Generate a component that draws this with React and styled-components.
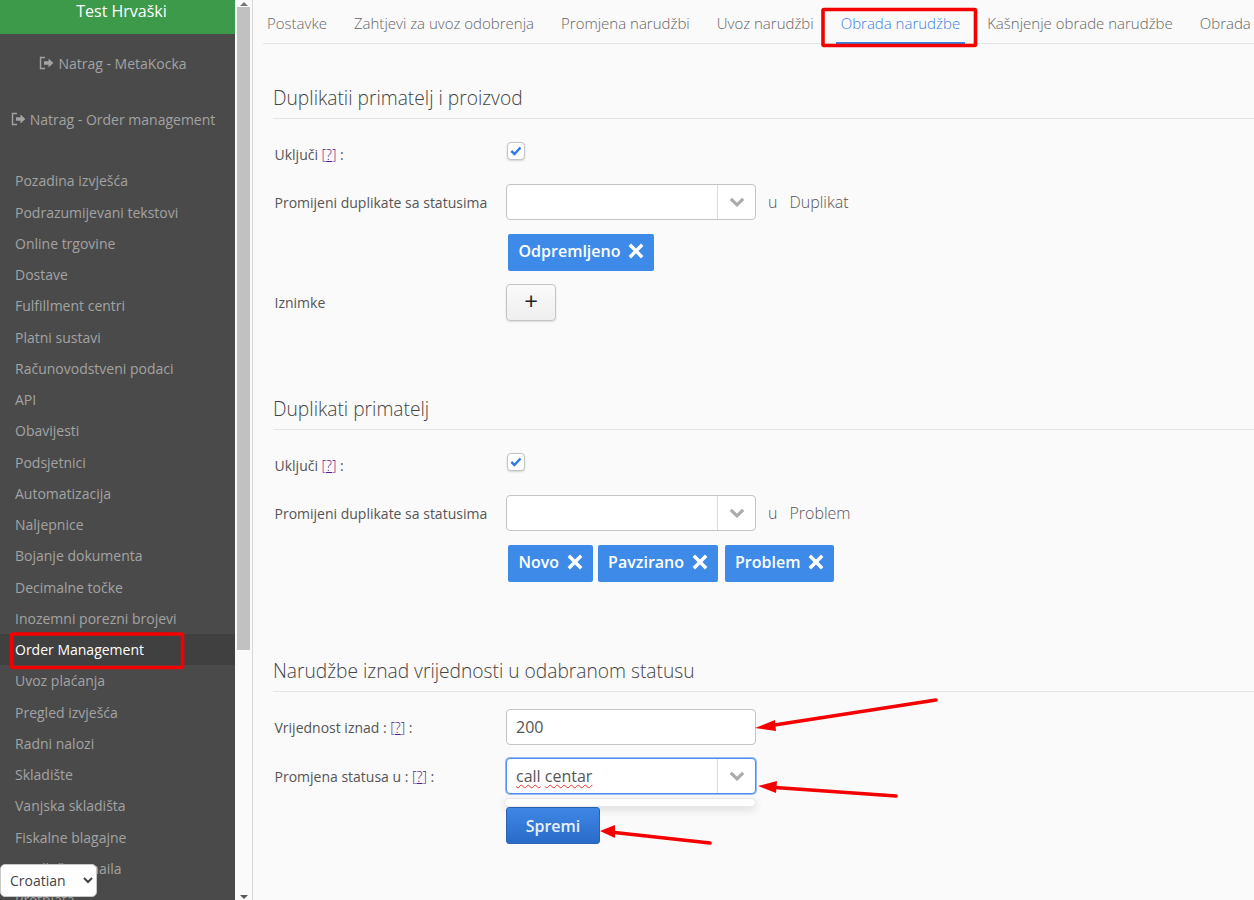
import React from "react";
import styled, { createGlobalStyle } from "styled-components";

const Global = createGlobalStyle`
  html, body { margin: 0; padding: 0; height: 900px; overflow: hidden; background: #fafafa; }
  * { box-sizing: border-box; }
  body { font-family: "Open Sans", "Noto Sans", sans-serif; font-size: 14px; color: #555; }
`;

const Page = styled.div`
  position: relative;
  display: flex;
  width: 1254px;
  height: 900px;
  overflow: hidden;
  background: #fafafa;
`;

const Sidebar = styled.aside`
  width: 235px;
  flex: none;
  height: 900px;
  background: #4a4a4a;
  overflow: hidden;
`;

const Brand = styled.div`
  height: 34px;
  padding-left: 8px;
  background: #3c9a4a;
  color: #fff;
  font-size: 16px;
  line-height: 22px;
  text-align: center;
`;

const BackLink = styled.div`
  display: flex;
  align-items: center;
  justify-content: center;
  gap: 4px;
  height: 56px;
  color: #a3a3a3;
  font-size: 14px;
  padding-right: 9px;
`;

const BackList = styled.div`
  display: flex;
  flex-direction: column;
  padding-top: 1px;
`;

const Menu = styled.ul`
  list-style: none;
  margin: 18.3px 0 0;
  padding: 0;
`;

const MenuItem = styled.li`
  height: 31.25px;
  line-height: 31.25px;
  padding-left: 15px;
  font-size: 14px;
  white-space: nowrap;
  color: ${(p) => (p.$active ? "#fff" : "#a3a3a3")};
  background: ${(p) => (p.$active ? "#404040" : "transparent")};
`;

const Scrollbar = styled.div`
  width: 18px;
  flex: none;
  height: 900px;
  display: flex;
  flex-direction: column;
  background: #fafafa;
  border-right: 1px solid #d8d8d8;
  padding: 0 2px 0 2px;
`;

const ScrollArrow = styled.div`
  height: 7px;
  flex: none;
  display: flex;
  align-items: center;
  justify-content: center;
  &::before {
    content: "";
    border-left: 4px solid transparent;
    border-right: 4px solid transparent;
    ${(p) => (p.$up ? "border-bottom: 4px solid #777;" : "border-top: 4px solid #555;")}
  }
`;

const ScrollThumb = styled.div`
  height: 643px;
  flex: none;
  background: #c1c1c1;
`;

const ScrollTrack = styled.div`
  flex: 1;
`;

const LangSelect = styled.select`
  position: absolute;
  left: 0;
  top: 864px;
  width: 97px;
  height: 33px;
  padding-left: 5px;
  background: #fff;
  border: 1px solid #c8c8c8;
  border-radius: 5px;
  color: #444;
  font-family: "Open Sans", sans-serif;
  font-size: 14px;
`;

const Main = styled.main`
  flex: 1;
  min-width: 0;
  overflow: hidden;
`;

const Tabs = styled.nav`
  display: flex;
  height: 44px;
  margin-left: 10px;
  border-bottom: 1px solid #e4e4e4;
  white-space: nowrap;
`;

const Tab = styled.div`
  flex: none;
  height: 44px;
  line-height: 47px;
  padding: 0 5px;
  margin-right: 17px;
  margin-left: ${(p) => (p.$first ? "-1px" : "0")};
  font-size: 15px;
  font-weight: 300;
  color: ${(p) => (p.$active ? "#3b82e0" : "#666")};
  border-bottom: ${(p) => (p.$active ? "2px solid #3b82e0" : "none")};
`;

const Section = styled.section`
  margin: ${(p) => p.$top}px 0 0 20px;
`;

const Heading = styled.h2`
  margin: 0;
  height: 34px;
  line-height: 25px;
  border-bottom: 1px solid #e4e4e4;
  font-size: 19.2px;
  font-weight: 300;
  color: #444;
  white-space: nowrap;
`;

const Row = styled.div`
  display: flex;
  align-items: ${(p) => (p.$top ? "flex-start" : "center")};
  margin-top: ${(p) => p.$mt}px;
  padding-left: 1.5px;
`;

const Label = styled.label`
  width: 231.5px;
  flex: none;
  font-size: 14px;
  line-height: 20px;
  color: #555;
  padding-top: ${(p) => p.$pt ?? 1}px;
`;

const Help = styled.span`
  color: #551a8b;
  font-weight: 300;
`;

const HelpMark = styled.span`
  text-decoration: underline;
`;

const Check = styled.span`
  width: 18px;
  height: 18px;
  margin-left: 1px;
  display: flex;
  align-items: center;
  justify-content: center;
  background: #fff;
  border: 1px solid #c4c4c4;
  border-radius: 4px;
  box-shadow: 0 1px 2px rgba(0, 0, 0, 0.15);
`;

const Combo = styled.div`
  position: relative;
  display: flex;
  width: 250px;
  height: 36px;
  background: #fff;
  border: 1px solid ${(p) => (p.$focus ? "#4d8fef" : "#c4c4c4")};
  border-radius: 4px;
  box-shadow: ${(p) => (p.$focus ? "0 0 0 1px rgba(77,144,240,.6)" : "none")};
`;

const ComboValue = styled.div`
  flex: 1;
  padding-left: 9px;
  font-size: 16px;
  line-height: 34px;
  color: #555;
`;

const Misspelled = styled.span`
  text-decoration: underline wavy #e33;
  text-decoration-thickness: 1px;
  text-underline-offset: 2px;
`;

const ComboArrow = styled.div`
  width: 38px;
  flex: none;
  display: flex;
  align-items: center;
  justify-content: center;
  border-left: 1px solid #ddd;
`;

const Suffix = styled.div`
  margin-left: 12px;
  font-size: 16px;
  font-weight: 300;
  color: #555;
  display: flex;
  gap: 12px;
`;

const Chips = styled.div`
  display: flex;
  margin: 14px 0 0 233px;
  padding-left: 2px;
`;

const Chip = styled.div`
  display: flex;
  align-items: center;
  gap: 7.5px;
  height: 37px;
  padding: 0 10px 3px 10.5px;
  margin-right: ${(p) => p.$gap || 0}px;
  background: #3e8ae8;
  border-radius: 2px;
  color: #fff;
  font-size: 16px;
  font-weight: 600;
`;

const PlusButton = styled.button`
  width: 50px;
  height: 37px;
  padding: 0 0 3px;
  background: linear-gradient(#fafafa, #efefef);
  border: 1px solid #c4c4c4;
  border-radius: 4px;
  box-shadow: 0 1px 2px rgba(0, 0, 0, 0.12);
  color: #222;
  font-family: "Open Sans", sans-serif;
  font-size: 24px;
  line-height: 1;
`;

const ValueInput = styled.input`
  display: block;
  width: 250px;
  height: 36px;
  padding: 0 9px;
  background: #fff;
  border: 1px solid #c4c4c4;
  border-radius: 4px;
  color: #555;
  font-family: "Open Sans", sans-serif;
  font-size: 16px;
`;

const EmptyMenu = styled.div`
  width: 252px;
  height: 9px;
  margin: 4px 0 0 231px;
  background: #fff;
  border: 1px solid #e8e8e8;
  border-radius: 5px;
  box-shadow: 0 3px 8px rgba(0, 0, 0, 0.12);
`;

const Save = styled.button`
  display: block;
  position: relative;
  width: 94px;
  height: 37px;
  margin: 0 0 0 233px;
  background: linear-gradient(#3f87e5, #2a6bc9);
  border: 1px solid #2a62b5;
  border-radius: 3px;
  color: #e8f1fc;
  font-family: "Open Sans", sans-serif;
  font-size: 16px;
  font-weight: 600;
`;

const Marks = styled.svg`
  position: absolute;
  left: 0;
  top: 0;
  pointer-events: none;
`;

const BackIcon = () => (
  <svg width="15" height="14" viewBox="0 0 15 14" fill="none">
    <path d="M6 1.5H1.5v11H6" stroke="currentColor" strokeWidth="1.4" />
    <path d="M5 5.3h4.5V2.6L14.4 7 9.5 11.4V8.7H5z" fill="currentColor" />
  </svg>
);

const Chevron = () => (
  <svg width="16" height="10" viewBox="0 0 16 10" fill="none">
    <path d="M1.8 1.8 8 7.8l6.2-6" stroke="#ababab" strokeWidth="3.2" />
  </svg>
);

const Cross = () => (
  <svg width="16" height="16" viewBox="0 0 16 16" fill="none">
    <path d="M1.8 1.8l12.4 12.4M14.2 1.8 1.8 14.2" stroke="#fff" strokeWidth="3.4" />
  </svg>
);

const Tick = () => (
  <svg width="12" height="10" viewBox="0 0 12 10" fill="none">
    <path d="M1.3 5 4.5 8l6-6.5" stroke="#2f7be6" strokeWidth="2.4" />
  </svg>
);

const menu = [
  "Pozadina izvješća", "Podrazumijevani tekstovi", "Online trgovine", "Dostave",
  "Fulfillment centri", "Platni sustavi", "Računovodstveni podaci", "API",
  "Obavijesti", "Podsjetnici", "Automatizacija", "Naljepnice", "Bojanje dokumenta",
  "Decimalne točke", "Inozemni porezni brojevi", "Order Management", "Uvoz plaćanja",
  "Pregled izvješća", "Radni nalozi", "Skladište", "Vanjska skladišta",
  "Fiskalne blagajne", "Predlošci emaila", "Pretplata",
];

const tabs = [
  "Postavke", "Zahtjevi za uvoz odobrenja", "Promjena narudžbi", "Uvoz narudžbi",
  "Obrada narudžbe", "Kašnjenje obrade narudžbe", "Obrada",
];

const HelpLabel = ({ text, pt }) => (
  <Label $pt={pt}>
    {text} <Help>[<HelpMark>?</HelpMark>]</Help> :
  </Label>
);

const Arrow = ({ from, to, head }) => (
  <g>
    <line x1={from[0]} y1={from[1]} x2={to[0]} y2={to[1]} stroke="#f40000" strokeWidth="3.6" strokeLinecap="round" />
    <polygon points={head} fill="#f40000" />
  </g>
);

export default function App() {
  return (
    <Page>
      <Global />
      <Sidebar>
        <Brand>Test Hrvaški</Brand>
        <BackList>
          <BackLink><BackIcon />Natrag - MetaKocka</BackLink>
          <BackLink><BackIcon />Natrag - Order management</BackLink>
        </BackList>
        <Menu>
          {menu.map((m) => (
            <MenuItem key={m} $active={m === "Order Management"}>{m}</MenuItem>
          ))}
        </Menu>
      </Sidebar>
      <Scrollbar>
        <ScrollArrow $up />
        <ScrollThumb />
        <ScrollTrack />
        <ScrollArrow />
      </Scrollbar>
      <Main>
        <Tabs>
          {tabs.map((t, i) => (
            <Tab key={t} $first={i === 0} $active={t === "Obrada narudžbe"}>{t}</Tab>
          ))}
        </Tabs>

        <Section $top={41}>
          <Heading>Duplikatii primatelj i proizvod</Heading>
          <Row $top $mt={23}>
            <HelpLabel text="Uključi" pt={3} />
            <Check><Tick /></Check>
          </Row>
          <Row $mt={19}>
            <Label>Promijeni duplikate sa statusima</Label>
            <Combo><ComboValue /><ComboArrow><Chevron /></ComboArrow></Combo>
            <Suffix><span>u</span><span>Duplikat</span></Suffix>
          </Row>
          <Chips><Chip>Odpremljeno<Cross /></Chip></Chips>
          <Row $mt={13}>
            <Label>Iznimke</Label>
            <PlusButton>+</PlusButton>
          </Row>
        </Section>

        <Section $top={75}>
          <Heading>Duplikati primatelj</Heading>
          <Row $top $mt={23}>
            <HelpLabel text="Uključi" pt={3} />
            <Check><Tick /></Check>
          </Row>
          <Row $mt={19}>
            <Label>Promijeni duplikate sa statusima</Label>
            <Combo><ComboValue /><ComboArrow><Chevron /></ComboArrow></Combo>
            <Suffix><span>u</span><span>Problem</span></Suffix>
          </Row>
          <Chips>
            <Chip $gap={5}>Novo<Cross /></Chip>
            <Chip $gap={7}>Pavzirano<Cross /></Chip>
            <Chip>Problem<Cross /></Chip>
          </Chips>
        </Section>

        <Section $top={76}>
          <Heading>Narudžbe iznad vrijednosti u odabranom statusu</Heading>
          <Row $mt={17}>
            <HelpLabel text="Vrijednost iznad :" />
            <ValueInput readOnly value="200" />
          </Row>
          <Row $mt={13}>
            <HelpLabel text="Promjena statusa u :" />
            <Combo $focus>
              <ComboValue><Misspelled>call</Misspelled> <Misspelled>centar</Misspelled></ComboValue>
              <ComboArrow><Chevron /></ComboArrow>
            </Combo>
          </Row>
          <EmptyMenu />
          <Save>Spremi</Save>
        </Section>
      </Main>
      <LangSelect defaultValue="Croatian">
        <option>Croatian</option>
      </LangSelect>
      <Marks width="1254" height="900" viewBox="0 0 1254 900" fill="none">
        <rect x="823" y="9.5" width="152.5" height="36" rx="1" stroke="#f40000" strokeWidth="3.6" />
        <rect x="11.5" y="634" width="171" height="33.5" rx="1" stroke="#f40000" strokeWidth="3.6" />
        <Arrow from={[936, 700]} to={[768, 726]} head="755,728 775,720 776,731" />
        <Arrow from={[896, 796]} to={[768, 787]} head="758,786 777,781 776,793" />
        <Arrow from={[710, 843]} to={[610, 832]} head="600,831 615,825 615,838" />
      </Marks>
    </Page>
  );
}
